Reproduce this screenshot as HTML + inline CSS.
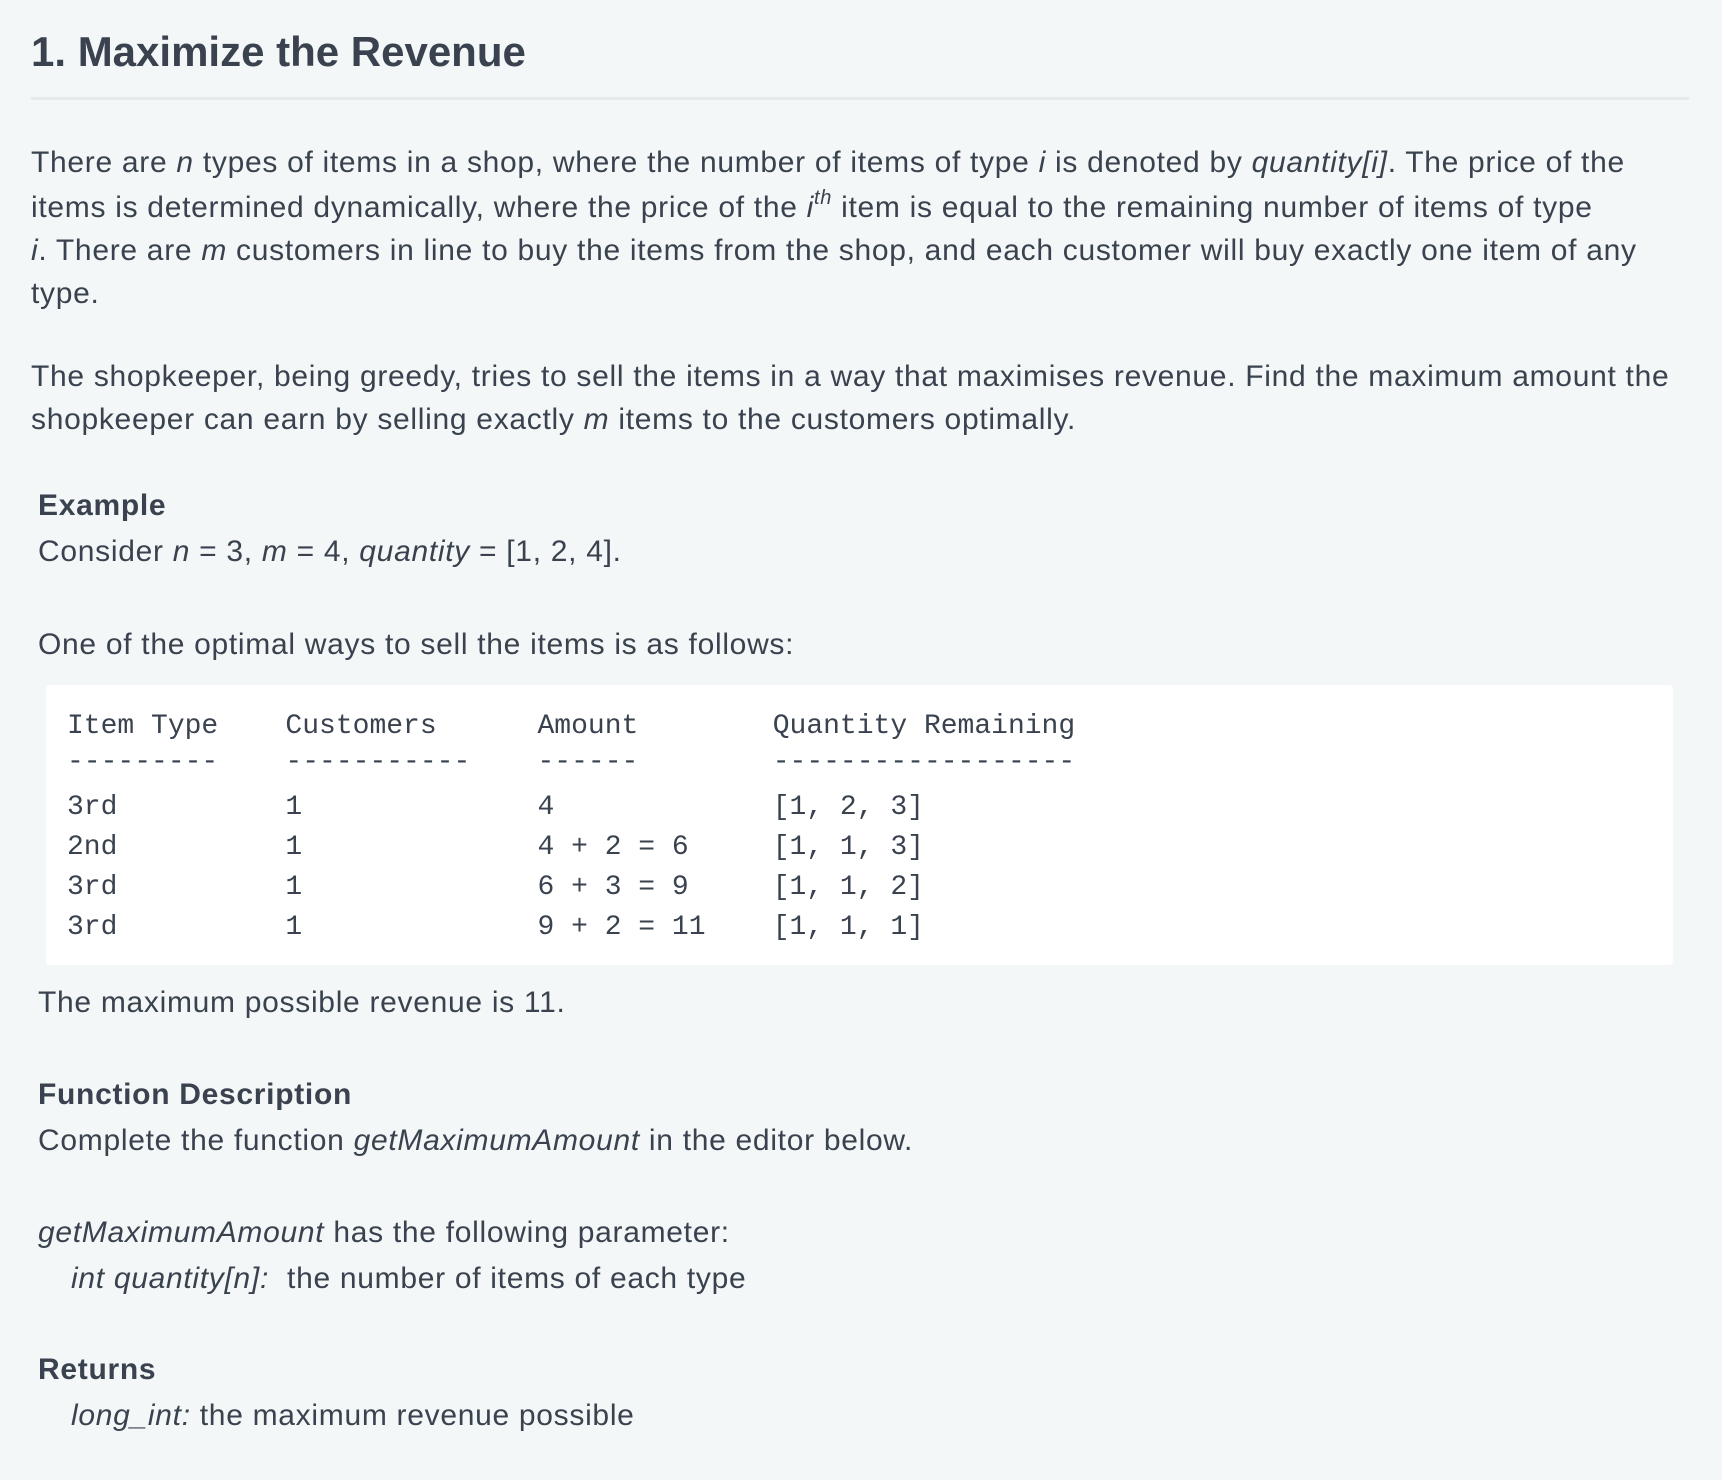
<!DOCTYPE html>
<html><head><meta charset="utf-8"><style>
html,body{margin:0;padding:0}
body{width:1722px;height:1480px;background:#f3f7f7;color:#39424e;font-family:"Liberation Sans",Arial,sans-serif;font-size:30px;letter-spacing:0.7px;position:relative;overflow:hidden}
.l{position:absolute;white-space:nowrap;line-height:44px;height:44px}
.b{font-weight:bold}
h1{position:absolute;left:31px;top:27px;margin:0;font-size:42px;line-height:50px;font-weight:bold;white-space:nowrap;letter-spacing:0}
.hr{position:absolute;left:31px;top:97px;width:1658px;height:3px;background:#e6eaec}
.box{position:absolute;left:46px;top:685px;width:1627px;height:280px;background:#fff;border-radius:4px}
pre{position:absolute;left:21px;top:0;margin:0;font-family:"Liberation Mono","DejaVu Sans Mono",monospace;font-size:28px;line-height:40px;color:#39424e;letter-spacing:0}
sup{font-size:20px;position:relative;top:-2px;line-height:0}
</style></head><body>
<h1>1. Maximize the Revenue</h1>
<div class="hr"></div>
<div class="l" style="left:31px;top:141px">There are <i>n</i> types of items in a shop, where the number of items of type <i>i</i> is denoted by <i>quantity[i]</i>. The price of the</div>
<div class="l" style="left:31px;top:186px">items is determined dynamically, where the price of the <i>i<sup>th</sup></i> item is equal to the remaining number of items of type</div>
<div class="l" style="left:31px;top:229px"><i>i</i>. There are <i>m</i> customers in line to buy the items from the shop, and each customer will buy exactly one item of any</div>
<div class="l" style="left:31px;top:272px">type.</div>
<div class="l" style="left:31px;top:355px">The shopkeeper, being greedy, tries to sell the items in a way that maximises revenue. Find the maximum amount the</div>
<div class="l" style="left:31px;top:398px">shopkeeper can earn by selling exactly <i>m</i> items to the customers optimally.</div>
<div class="l b" style="left:38px;top:484px">Example</div>
<div class="l" style="left:38px;top:530px">Consider <i>n</i> = 3, <i>m</i> = 4, <i>quantity</i> = [1, 2, 4].</div>
<div class="l" style="left:38px;top:623px">One of the optimal ways to sell the items is as follows:</div>
<div class="box">
<pre style="top:22px">Item Type    Customers      Amount        Quantity Remaining</pre>
<pre style="top:58px">---------    -----------    ------        ------------------</pre>
<pre style="top:103px">3rd          1              4             [1, 2, 3]
2nd          1              4 + 2 = 6     [1, 1, 3]
3rd          1              6 + 3 = 9     [1, 1, 2]
3rd          1              9 + 2 = 11    [1, 1, 1]</pre></div>
<div class="l" style="left:38px;top:981px">The maximum possible revenue is 11.</div>
<div class="l b" style="left:38px;top:1073px">Function Description</div>
<div class="l" style="left:38px;top:1119px">Complete the function <i>getMaximumAmount</i> in the editor below.</div>
<div class="l" style="left:38px;top:1211px"><i>getMaximumAmount</i> has the following parameter:</div>
<div class="l" style="left:71px;top:1257px"><i>int quantity[n]:</i>&nbsp; the number of items of each type</div>
<div class="l b" style="left:38px;top:1348px">Returns</div>
<div class="l" style="left:71px;top:1394px"><i>long_int:</i> the maximum revenue possible</div>
</body></html>
